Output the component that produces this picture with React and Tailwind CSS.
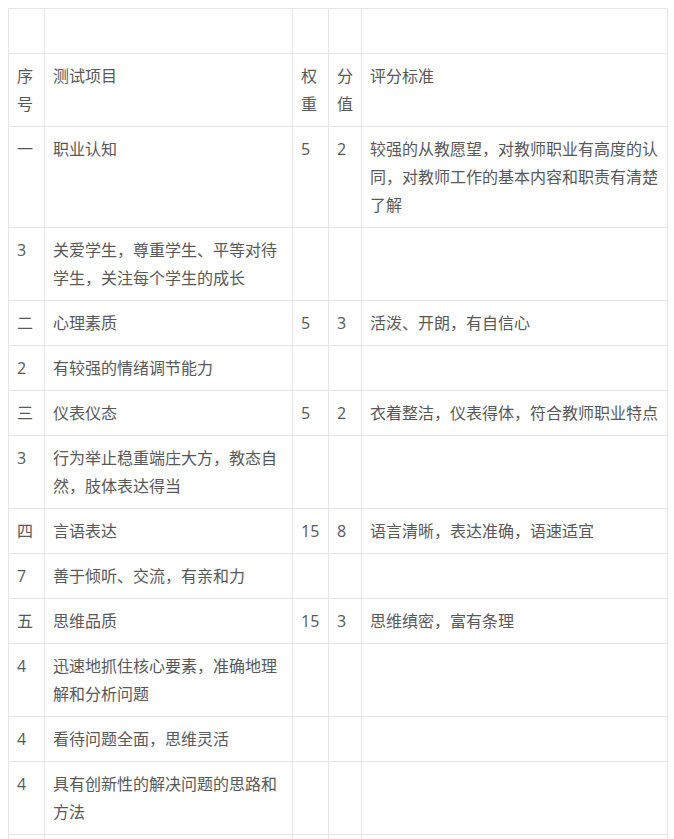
import React from "react";

const rows = [
  ["", "", "", "", ""],
  ["序号", "测试项目", "权重", "分值", "评分标准"],
  ["一", "职业认知", "5", "2", "较强的从教愿望，对教师职业有高度的认同，对教师工作的基本内容和职责有清楚了解"],
  ["3", "关爱学生，尊重学生、平等对待学生，关注每个学生的成长", "", "", ""],
  ["二", "心理素质", "5", "3", "活泼、开朗，有自信心"],
  ["2", "有较强的情绪调节能力", "", "", ""],
  ["三", "仪表仪态", "5", "2", "衣着整洁，仪表得体，符合教师职业特点"],
  ["3", "行为举止稳重端庄大方，教态自然，肢体表达得当", "", "", ""],
  ["四", "言语表达", "15", "8", "语言清晰，表达准确，语速适宜"],
  ["7", "善于倾听、交流，有亲和力", "", "", ""],
  ["五", "思维品质", "15", "3", "思维缜密，富有条理"],
  ["4", "迅速地抓住核心要素，准确地理解和分析问题", "", "", ""],
  ["4", "看待问题全面，思维灵活", "", "", ""],
  ["4", "具有创新性的解决问题的思路和方法", "", "", ""],
  ["", "", "", "", ""],
];

export default function App() {
  return (
    <div
      className="bg-white p-2 text-[16px] leading-[28px] text-[#585858]"
      style={{ fontFamily: '"Open Sans", "Noto Sans CJK SC", sans-serif' }}
    >
      <table className="table-fixed border-collapse w-[659px]">
        <colgroup>
          <col className="w-[36px]" />
          <col className="w-[248px]" />
          <col className="w-[36px]" />
          <col className="w-[33px]" />
          <col className="w-[306px]" />
        </colgroup>
        <tbody>
          {rows.map((r, i) => (
            <tr key={i}>
              {r.map((c, j) => (
                <td
                  key={j}
                  className="border border-[#e6e6e6] px-2 py-2 align-top break-all h-[45px]"
                >
                  {c}
                </td>
              ))}
            </tr>
          ))}
        </tbody>
      </table>
    </div>
  );
}
